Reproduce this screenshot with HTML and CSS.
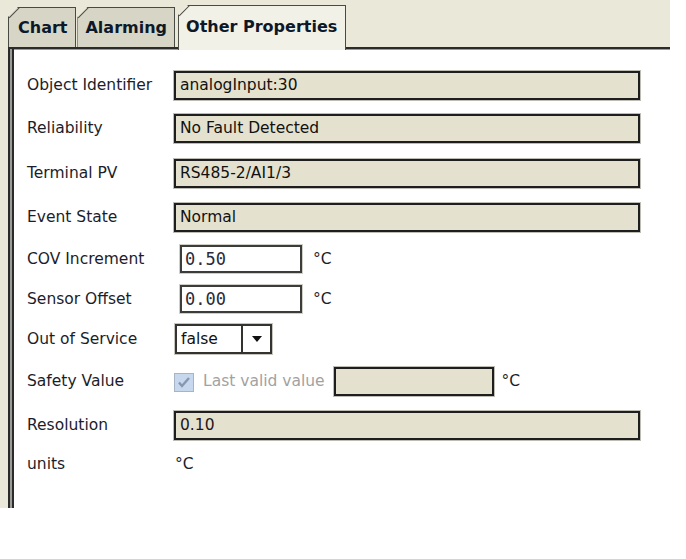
FILE: index.html
```html
<!DOCTYPE html>
<html lang="en">

<head>
  <meta charset="UTF-8">
  <title>Other Properties</title>
  <link rel="stylesheet" href="styles.css">
</head>

<body>
  <div class="frame">
    <div class="tabs">
      <div class="tab first">Chart</div>
      <div class="tab">Alarming</div>
      <div class="tab active">Other Properties</div>
    </div>

    <div class="panel">
      <div class="form">
        <div class="label">Object Identifier</div>
        <div class="value"><div class="field wide">analogInput:30</div></div>

        <div class="label">Reliability</div>
        <div class="value"><div class="field wide">No Fault Detected</div></div>

        <div class="label">Terminal PV</div>
        <div class="value"><div class="field wide">RS485-2/AI1/3</div></div>

        <div class="label">Event State</div>
        <div class="value"><div class="field wide">Normal</div></div>

        <div class="label">COV Increment</div>
        <div class="value"><div class="edit">0.50</div><span class="unit">°C</span></div>

        <div class="label">Sensor Offset</div>
        <div class="value"><div class="edit">0.00</div><span class="unit">°C</span></div>

        <div class="label">Out of Service</div>
        <div class="value">
          <div class="combo">
            <span class="combo-text">false</span>
            <span class="combo-btn">
              <svg width="10" height="6" viewBox="0 0 10 6"><path d="M0 0h10L5 6z" fill="#111"/></svg>
            </span>
          </div>
        </div>

        <div class="label">Safety Value</div>
        <div class="value">
          <span class="check">
            <svg width="20" height="19" viewBox="0 0 20 19">
              <rect x="0.5" y="0.5" width="19" height="18" fill="#c6d7ee" stroke="#a7b4c6"/>
              <path d="M5 9.5l3 3.5 7-8" fill="none" stroke="#8797b0" stroke-width="2.4"/>
            </svg>
          </span>
          <span class="disabled">Last valid value</span>
          <div class="field small"></div>
          <span class="unit">°C</span>
        </div>

        <div class="label">Resolution</div>
        <div class="value"><div class="field wide res">0.10</div></div>

        <div class="label">units</div>
        <div class="value"><span class="plain">°C</span></div>
      </div>
    </div>
  </div>
</body>
</html>
```

FILE: styles.css
```css
body {
  margin: 0;
  background: #ffffff;
  font-family: 'DejaVu Sans', Verdana, sans-serif;
  font-size: 15.5px;
  color: #1b1d2b;
}

.frame {
  width: 670px;
  height: 508px;
  padding-left: 8px;
  box-sizing: border-box;
  background: #eae8d8;
}

/* tab strip */
.tabs {
  height: 47px;
  display: flex;
  align-items: flex-end;
}

.tab {
  position: relative;
  height: 40px;
  padding: 0 7px;
  display: flex;
  align-items: center;
  box-sizing: border-box;
  border: 1px solid #4a4a44;
  border-bottom: none;
  background: #d7d5c5;
  color: #0e1828;
  font-weight: bold;
  font-size: 16px;
  margin-right: 1px;
  clip-path: polygon(0 10px, 10px 0, 100% 0, 100% 100%, 0 100%);
}

.tab.first {
  padding: 0 8px 0 9px;
}

.tab::before {
  content: "";
  position: absolute;
  left: -2px;
  top: 4px;
  width: 15px;
  height: 1px;
  background: #4a4a44;
  transform: rotate(-45deg);
}

.tab.active {
  height: 45px;
  margin: 0 0 -3px 2px;
  padding: 0 8px 3px 7px;
  background: #f2f1e7;
  z-index: 1;
}

/* content panel */
.panel {
  height: 461px;
  box-sizing: border-box;
  border-left: 2px solid #2b2b2b;
  border-top: 2px solid #2b2b2b;
  box-shadow: inset 2px 0 #9c9c96, inset 4px 0 #2b2b2b, inset 0 1px #9c9c96;
  background: #ffffff;
  padding: 21px 0 0 17px;
}

.form {
  display: grid;
  grid-template-columns: 147px 1fr;
  grid-template-rows: 43px 45px 44px 42px 40px 40px 42px 44px 39px 30px;
}

.label, .value {
  height: 30px;
  display: flex;
  align-items: center;
}

.field {
  height: 29px;
  box-sizing: border-box;
  border: 2px solid #1e1e1e;
  box-shadow: 0 0 0 1px #bdbdb6;
  background: #e4e2ce;
  color: #111;
  padding-left: 4px;
  display: flex;
  align-items: center;
}

.field.wide {
  width: 466px;
}

.field.small {
  width: 160px;
  margin-left: 9px;
}

.field.res {
  color: #26141c;
}

.edit {
  width: 122px;
  height: 28px;
  box-sizing: border-box;
  margin-left: 6px;
  border: 2px solid #3c3c3a;
  box-shadow: 0 0 0 1px #cfcfc8;
  background: #fff;
  font-family: 'DejaVu Sans Mono', monospace;
  font-size: 17px;
  color: #2a2a3a;
  padding-left: 3px;
  display: flex;
  align-items: center;
}

.unit {
  margin-left: 11px;
}

.field.small + .unit {
  margin-left: 8px;
}

.combo {
  width: 97px;
  height: 30px;
  margin-left: 1px;
  box-sizing: border-box;
  border: 2px solid #333330;
  box-shadow: 0 0 0 1px #c6c6bf;
  background: #fff;
  display: flex;
}

.combo-text {
  flex: 1;
  padding-left: 4px;
  display: flex;
  align-items: center;
  color: #111;
}

.combo-btn {
  width: 27px;
  border-left: 2px solid #333330;
  display: flex;
  align-items: center;
  justify-content: center;
}

.check {
  display: flex;
  margin-top: 3px;
}

.disabled {
  margin-left: 9px;
  color: #a2a2a2;
}

.plain {
  margin-left: 1px;
}
```
